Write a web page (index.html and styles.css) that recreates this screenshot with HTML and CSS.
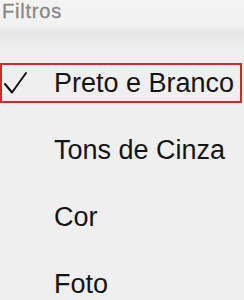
FILE: index.html
```html
<!DOCTYPE html>
<html lang="pt">
  <head>
    <meta charset="UTF-8" />
    <meta name="viewport" content="width=device-width, initial-scale=1.0" />
    <title>Filtros</title>
    <link rel="stylesheet" href="styles.css">
  </head>
  <body>
    <div class="sheet">
      <div class="sheet-header">
        <h2 class="sheet-title">Filtros</h2>
      </div>
      <ul class="filter-list">
        <li class="filter-item selected">
          <span class="check">
            <svg width="26" height="24" viewBox="0 0 26 24">
              <path d="M3 13 L10 21.5 L24 2" fill="none" stroke="#111" stroke-width="2" stroke-linecap="round" stroke-linejoin="round" />
            </svg>
          </span>
          <span class="label">Preto e Branco</span>
        </li>
        <li class="filter-item">
          <span class="check"></span>
          <span class="label">Tons de Cinza</span>
        </li>
        <li class="filter-item">
          <span class="check"></span>
          <span class="label">Cor</span>
        </li>
        <li class="filter-item">
          <span class="check"></span>
          <span class="label">Foto</span>
        </li>
      </ul>
    </div>
  </body>
</html>
```

FILE: styles.css
```css
body {
  margin: 0;
  font-family: "Liberation Sans", Arial, sans-serif;
  background-color: #efefef;
}
.sheet {
  width: 244px;
  height: 300px;
  overflow: hidden;
  background: linear-gradient(
    to bottom,
    #f3f3f3 0px,
    #f2f2f2 26px,
    #e6e6e6 33px,
    #ebebeb 40px,
    #efefef 50px
  );
}
.sheet-header {
  height: 63px;
}
.sheet-title {
  margin: 0;
  padding: 0 0 0 2px;
  font-size: 20px;
  line-height: 22px;
  letter-spacing: 0.8px;
  font-weight: normal;
  color: #878787;
  -webkit-text-stroke: 0.3px #878787;
}
.filter-list {
  list-style: none;
  margin: 0;
  padding: 0;
}
.filter-item {
  display: flex;
  align-items: center;
  height: 40px;
  margin-bottom: 27px;
  border: 2px solid transparent;
  box-sizing: border-box;
  width: 242px;
  font-size: 27px;
  color: #141414;
}
.filter-item.selected {
  border-color: #d8262e;
}
.check {
  width: 52px;
  height: 24px;
  flex-shrink: 0;
  display: flex;
  align-items: center;
}
.check svg {
  display: block;
}
.label {
  line-height: 36px;
}
```
